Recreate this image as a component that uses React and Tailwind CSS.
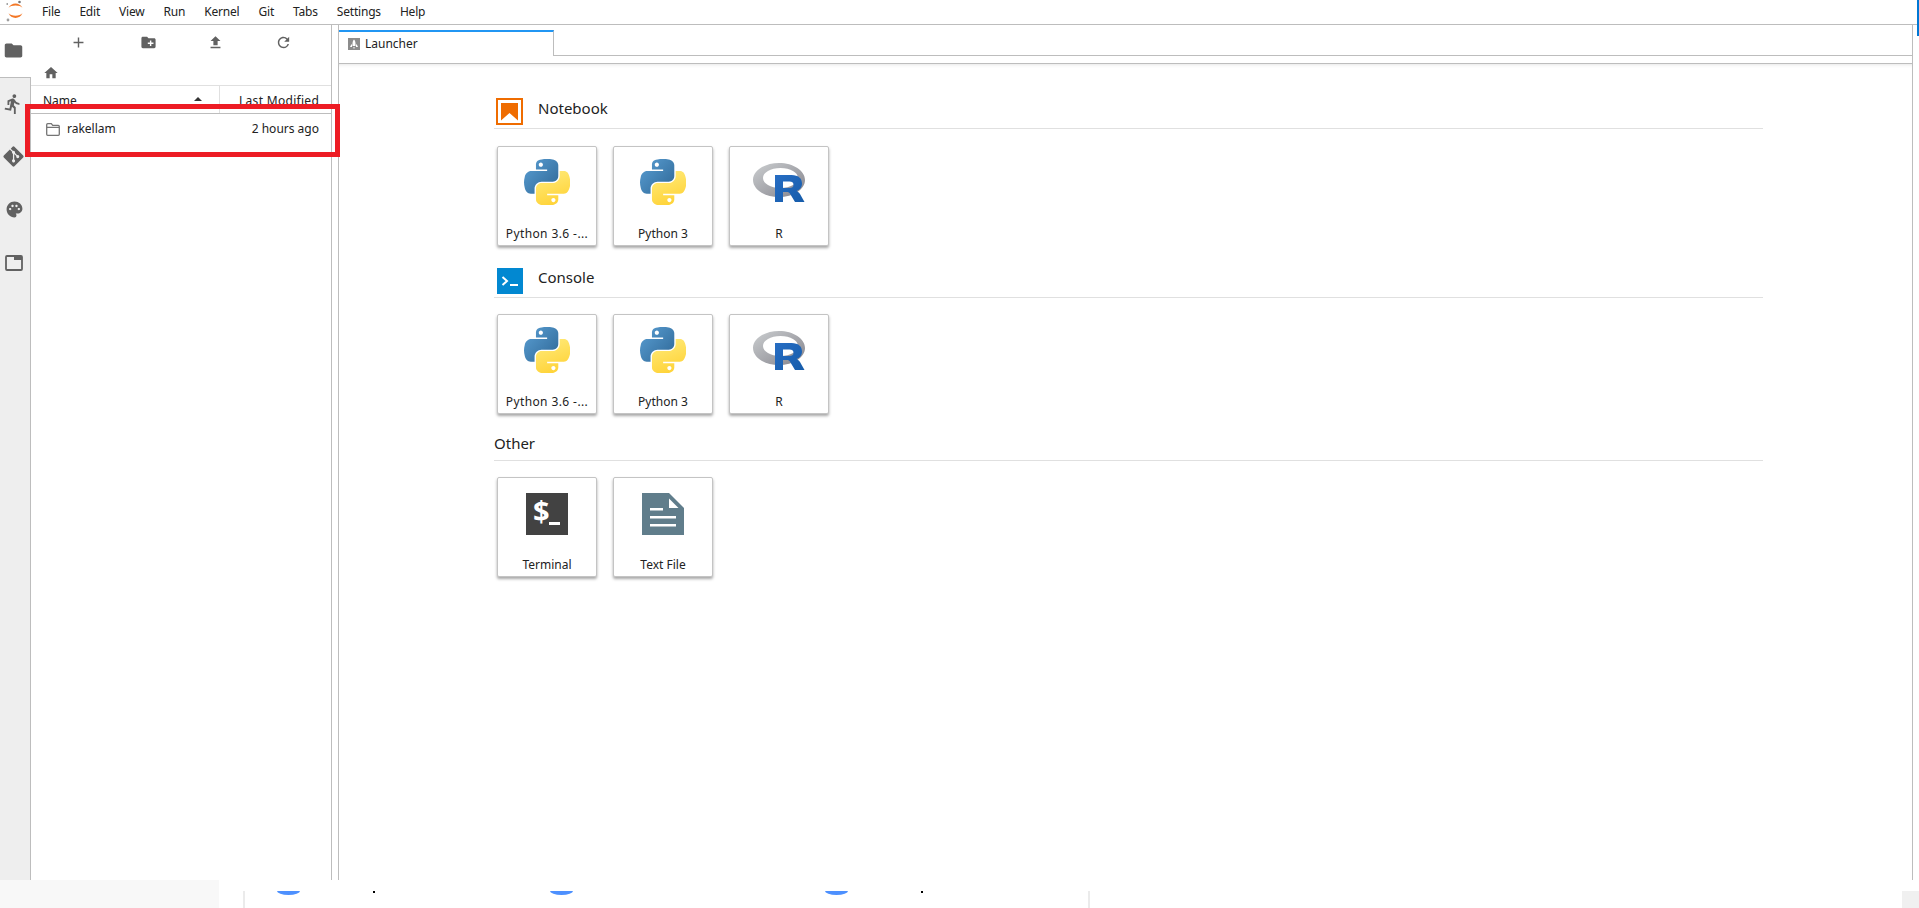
import React from "react";
import { MdAdd, MdCreateNewFolder, MdFileUpload, MdRefresh, MdHome, MdFolder, MdDirectionsRun, MdPalette } from "react-icons/md";
import { FaGitAlt } from "react-icons/fa";

function Defs() {
  return (
    <svg width="0" height="0" className="absolute">
      <defs>
        <linearGradient id="pyBlue" x1="0" y1="0" x2="1" y2="0.9">
          <stop offset="0" stopColor="#5A9FD4" />
          <stop offset="1" stopColor="#306998" />
        </linearGradient>
        <linearGradient id="pyYellow" x1="0.6" y1="0.9" x2="0.3" y2="0.1">
          <stop offset="0" stopColor="#FFD43B" />
          <stop offset="1" stopColor="#FFE873" />
        </linearGradient>
        <linearGradient id="rGray" x1="0" y1="0" x2="1" y2="1">
          <stop offset="0" stopColor="#cbced0" />
          <stop offset="1" stopColor="#84838b" />
        </linearGradient>
        <linearGradient id="rBlue" x1="0" y1="0" x2="1" y2="1">
          <stop offset="0" stopColor="#276dc3" />
          <stop offset="1" stopColor="#165caa" />
        </linearGradient>
      </defs>
    </svg>
  );
}

function PythonIcon() {
  return (
    <svg width="46" height="46" viewBox="0 0 110.4 110">
      <path fill="url(#pyBlue)" d="M54.919 0.001c-4.584.022-8.961.413-12.813 1.095C30.76 3.099 28.7 7.295 28.7 15.032v10.219h26.813v3.406H18.638c-7.793 0-14.616 4.684-16.75 13.594-2.462 10.213-2.571 16.586 0 27.25 1.905 7.938 6.457 13.594 14.25 13.594h9.219v-12.25c0-8.85 7.657-16.656 16.75-16.656h26.781c7.454 0 13.406-6.138 13.406-13.625v-25.531c0-7.266-6.13-12.725-13.406-13.937C64.282.328 59.502-.02 54.919.001zm-14.5 8.219c2.77 0 5.031 2.299 5.031 5.125 0 2.816-2.262 5.094-5.031 5.094-2.78 0-5.031-2.278-5.031-5.094 0-2.826 2.252-5.125 5.031-5.125z" />
      <path fill="url(#pyYellow)" d="M85.638 28.657v11.906c0 9.231-7.826 17-16.75 17H42.106c-7.336 0-13.406 6.279-13.406 13.625v25.531c0 7.266 6.319 11.54 13.406 13.625 8.487 2.496 16.626 2.947 26.781 0 6.75-1.954 13.406-5.888 13.406-13.625V86.501H55.513v-3.406H95.7c7.793 0 10.696-5.436 13.406-13.594 2.799-8.399 2.68-16.476 0-27.25-1.926-7.757-5.604-13.594-13.406-13.594H85.638zM70.575 93.313c2.78 0 5.031 2.278 5.031 5.094 0 2.826-2.252 5.125-5.031 5.125-2.77 0-5.031-2.299-5.031-5.125 0-2.816 2.262-5.094 5.031-5.094z" />
    </svg>
  );
}

function RIcon() {
  return (
    <svg width="52" height="40" viewBox="0 0 52 40" className="mt-px">
      <path fill="url(#rGray)" fillRule="evenodd" d="M26 0C11.600 0 0 7.600 0 17s11.600 17 26 17 26-7.600 26-17S40.400 0 26 0zM27.500 5C37.500 5 45 9.500 45 15s-7.500 10-17.500 10S10 20.500 10 15 17.500 5 27.500 5z" />
      <path fill="url(#rBlue)" fillRule="evenodd" d="M22 12h16.500c7 0 10.500 3.500 10.500 8.500 0 4-2.500 6.500-5.500 7.500 1.500.5 2.500 1.500 3.500 3l4.500 8h-9.500l-4.500-7.500c-1-2-2-2.500-4-2.500H30v10h-8zM30 18.500V25h6.500c2.500 0 4-1.200 4-3.300s-1.500-3.200-4-3.200z" />
    </svg>
  );
}

function TerminalIcon() {
  return (
    <svg width="42" height="42" viewBox="0 0 42 42" className="mt-px overflow-visible">
      <rect width="42" height="42" fill="#424242" />
      <text x="7" y="29" fontSize="29" fontWeight="700" fontFamily="'Open Sans', sans-serif" fill="#fff">$</text>
      <rect x="23" y="29" width="11" height="3" fill="#fff" />
    </svg>
  );
}

function TextFileIcon() {
  return (
    <svg width="42" height="42" viewBox="0 0 42 42" className="mt-px">
      <path fill="#607d8b" d="M0 0h27l15 15v27H0z" />
      <path fill="#fff" d="M27 5.500l9.500 9.500H27z" />
      <path fill="#fff" d="M8 15h13v2.500H8zM8 23h26v2.500H8zM8 31h26v2.500H8z" />
    </svg>
  );
}

function NotebookIcon() {
  return (
    <svg width="27" height="27" viewBox="0 0 27 27" className="shrink-0">
      <rect x="1" y="1" width="25" height="25" fill="#fff" stroke="#ef6c00" strokeWidth="2" />
      <path fill="#ef6c00" d="M5 5h17v17.500L13.500 15 5 22.500z" />
    </svg>
  );
}

function ConsoleIcon() {
  return (
    <svg width="26" height="26" viewBox="0 0 26 26" className="shrink-0">
      <rect width="26" height="26" fill="#0288d1" />
      <path fill="none" stroke="#fff" strokeWidth="2" d="M5.500 9l4.500 4-4.500 4" />
      <rect x="13" y="16" width="8" height="2" fill="#fff" />
    </svg>
  );
}

function JupyterLogo() {
  return (
    <svg width="18" height="24" viewBox="0 0 18 24" className="shrink-0">
      <path fill="#f37726" d="M2.500 8C5 2 14 2 16.500 8 14 4.800 5 4.800 2.500 8z" />
      <path fill="#f37726" d="M2.500 13C5 19.500 14 19.500 16.500 13 14 16.500 5 16.500 2.500 13z" />
      <circle cx="13.500" cy="2" r="1.300" fill="#767677" />
      <circle cx="1.200" cy="4" r="0.800" fill="#616262" />
      <circle cx="2" cy="20" r="1.400" fill="#9e9e9e" />
    </svg>
  );
}

function TabsIcon() {
  return (
    <svg width="18" height="16" viewBox="0 0 18 16">
      <rect x="1" y="1" width="16" height="14" rx="1" fill="none" stroke="#616161" strokeWidth="1.800" />
      <rect x="9" y="1" width="8" height="4" fill="#616161" />
    </svg>
  );
}

function RowFolderIcon() {
  return (
    <svg width="14" height="13" viewBox="0 0 14 13" className="shrink-0">
      <path fill="none" stroke="#757575" strokeWidth="1.300" d="M1.700.7h3.600l1.400 1.700h5.600c.6 0 1 .4 1 1v7.900c0 .6-.4 1-1 1H1.700c-.6 0-1-.4-1-1V1.700c0-.6.4-1 1-1zM.7 4.300h12.600" />
    </svg>
  );
}

function Card({ label, labelClass = "", children }) {
  return (
    <div className="w-[100px] h-[100px] bg-white border border-[#c4c4c4] rounded-[2px] shadow-[0_2px_3px_rgba(0,0,0,0.35)] flex flex-col items-center">
      <div className="mt-[12px] h-[46px] flex items-center justify-center">{children}</div>
      <div className={`mt-[21px] h-[16px] leading-[16px] text-[12px] text-[#222] whitespace-nowrap ${labelClass}`}>{label}</div>
    </div>
  );
}

function Section({ icon, title, className, headerClass, titleClass, cardsClass, children }) {
  return (
    <section className={className}>
      <div className={`flex items-center border-b border-[#e0e0e0] ${headerClass}`}>
        {icon}
        <span className={`text-[15px] text-[#222] leading-[22px] ${titleClass}`}>{title}</span>
      </div>
      <div className={`flex gap-[16px] pl-[3px] ${cardsClass}`}>{children}</div>
    </section>
  );
}

const menus = ["File", "Edit", "View", "Run", "Kernel", "Git", "Tabs", "Settings", "Help"];

export default function App() {
  return (
    <div className="relative w-full h-[908px] overflow-hidden bg-white font-['Noto_Sans',sans-serif] text-[#222]">
      <Defs />
      <div className="h-[880px] flex flex-col">
        {/* menu bar */}
        <header className="h-[25px] shrink-0 flex items-center border-b border-[#bdbdbd] pl-[6px] relative">
          <JupyterLogo />
          <nav className="flex gap-[19px] ml-[18px] text-[12px] tracking-[-0.2px]">
            {menus.map((m) => (
              <span key={m}>{m}</span>
            ))}
          </nav>
          <div className="absolute right-0 top-0 w-[2px] h-[36px] bg-[#0078d4]" />
        </header>

        <div className="flex flex-1 min-h-0">
          {/* activity bar */}
          <aside className="w-[31px] shrink-0 flex flex-col bg-[#eeeeee] text-[#616161]">
            <div className="h-[52px] bg-white pt-[15px] pl-[3px]">
              <MdFolder size={21} />
            </div>
            <div className="flex-1 border-t border-r border-[#bdbdbd] flex flex-col">
              <div className="h-[53px] pt-[15px] pl-[2px]"><MdDirectionsRun size={22} /></div>
              <div className="h-[53px] pt-[14px] pl-[2px]"><FaGitAlt size={23} /></div>
              <div className="h-[53px] pt-[16px] pl-[5px]"><MdPalette size={19} /></div>
              <div className="h-[53px] pt-[18px] pl-[5px]"><TabsIcon /></div>
            </div>
          </aside>

          {/* file browser */}
          <section className="w-[301px] shrink-0 border-r border-[#bdbdbd] flex flex-col text-[12px]">
            <div className="h-[35px] shrink-0 flex items-center text-[#616161]">
              <span className="w-[94px] flex justify-center"><MdAdd size={17} /></span>
              <span className="w-[46px] flex justify-center"><MdCreateNewFolder size={17} /></span>
              <span className="w-[88px] flex justify-center"><MdFileUpload size={17} /></span>
              <span className="w-[48px] flex justify-center"><MdRefresh size={17} /></span>
            </div>
            <div className="h-[25px] shrink-0 pl-[12px] pt-[5px] text-[#616161]"><MdHome size={16} /></div>
            <div className="h-[29px] shrink-0 flex border-t border-b border-[#e0e0e0] border-b-[#bdbdbd]">
              <div className="w-[189px] pl-[12px] pt-[6px] relative border-r border-[#e0e0e0]">
                Name
                <span className="absolute left-[163px] top-[11px] w-0 h-0 border-x-[4px] border-x-transparent border-b-[4px] border-b-[#333]" />
              </div>
              <div className="flex-1 pl-[19px] pt-[6px] tracking-[0.3px]">Last Modified</div>
            </div>
            <div className="h-[30px] shrink-0 flex items-center pl-[15px] pr-[12px]">
              <RowFolderIcon />
              <span className="ml-[7px]">rakellam</span>
              <span className="ml-auto">2 hours ago</span>
            </div>
          </section>

          {/* main area */}
          <main className="ml-[6px] mr-[6px] flex-1 min-w-0 flex flex-col border-l border-r border-[#bdbdbd]">
            <div className="h-[31px] shrink-0 flex -mr-px">
              <div className="w-[215px] mt-[5px] h-[26px] border-t-2 border-t-[#2196f3] border-r border-r-[#bdbdbd] flex items-center pl-[9px] text-[12px]">
                <span className="w-[12px] h-[12px] bg-[#8c8c8c] flex items-center justify-center mr-[5px]">
                  <svg width="10" height="10" viewBox="0 0 10 10"><path fill="#fff" d="M5 0.500c1 1 1.500 2.500 1.500 4v2.500h-3V4.500c0-1.500.5-3 1.500-4zM2 6l1-1v3H1zM8 6L7 5v3h2zM4.500 8h1v1.500h-1z" /></svg>
                </span>
                Launcher
              </div>
              <div className="flex-1 border-b border-[#bdbdbd]" />
            </div>
            <div className="h-[8px] shrink-0 border-b border-[#bdbdbd]" />
            <div className="flex-1 min-h-0 pl-[155px] pr-[149px] shadow-[inset_0_4px_4px_-4px_rgba(0,0,0,0.15)]">
              <Section
                className="pt-[34px]"
                headerClass="h-[31px] pb-[3px] pl-[2px]"
                titleClass="ml-[15px] -mt-[7px]"
                cardsClass="mt-[17px]"
                icon={<NotebookIcon />}
                title="Notebook"
              >
                <Card label="Python 3.6 -..." labelClass="tracking-[0.4px]"><PythonIcon /></Card>
                <Card label="Python 3"><PythonIcon /></Card>
                <Card label="R"><RIcon /></Card>
              </Section>
              <Section
                className="mt-[22px]"
                headerClass="h-[30px] pb-[3px] pl-[3px]"
                titleClass="ml-[15px] -mt-[8px]"
                cardsClass="mt-[16px]"
                icon={<ConsoleIcon />}
                title="Console"
              >
                <Card label="Python 3.6 -..." labelClass="tracking-[0.4px]"><PythonIcon /></Card>
                <Card label="Python 3"><PythonIcon /></Card>
                <Card label="R"><RIcon /></Card>
              </Section>
              <Section
                className="mt-[18px]"
                headerClass="h-[29px] pb-[5px]"
                titleClass="-mt-[2px]"
                cardsClass="mt-[16px]"
                title="Other"
              >
                <Card label="Terminal"><TerminalIcon /></Card>
                <Card label="Text File"><TextFileIcon /></Card>
              </Section>
            </div>
          </main>
        </div>
      </div>

      {/* strip of the page behind */}
      <footer className="h-[28px] flex">
        <div className="w-[219px] shrink-0 bg-[#f8f8f8]" />
        <div className="ml-[24px] mt-[11px] w-[847px] h-[17px] border-x-2 border-[#ebebeb] flex items-start">
          <span className="ml-[32px] w-[23px] h-[4px] bg-[#4d90fe] rounded-b-[50%_100%]" />
          <span className="ml-[73px] w-[2px] h-[2px] bg-black" />
          <span className="ml-[175px] w-[23px] h-[4px] bg-[#4d90fe] rounded-b-[50%_100%]" />
          <span className="ml-[252px] w-[23px] h-[4px] bg-[#4d90fe] rounded-b-[50%_100%]" />
          <span className="ml-[73px] w-[2px] h-[2px] bg-black" />
        </div>
        <div className="ml-auto mt-[11px] w-[17px] h-[17px] bg-[#f0f0f0]" />
      </footer>

      {/* red annotation */}
      <div className="absolute left-[25px] top-[104px] w-[315px] h-[53px] border-[5px] border-[#ed1c24]" />
    </div>
  );
}
